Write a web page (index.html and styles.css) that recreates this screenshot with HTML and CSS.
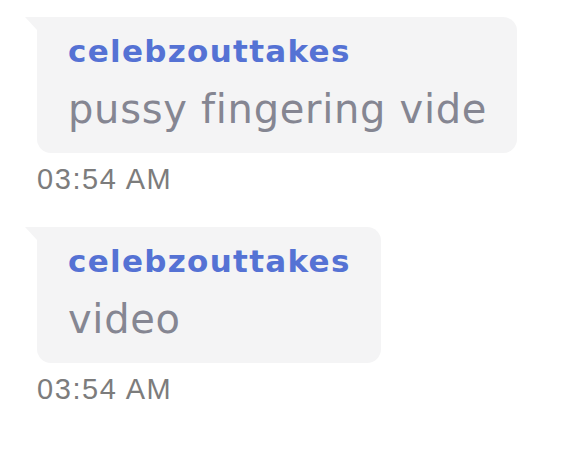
FILE: index.html
```html
<!DOCTYPE html>
<html>
<head>
<meta charset="utf-8">
<link rel="stylesheet" href="styles.css">
</head>
<body>
<div class="chat">
  <div class="msg">
    <div class="bubble">
      <div class="author">celebzouttakes</div>
      <div class="text">pussy fingering vide</div>
    </div>
    <div class="time">03:54 AM</div>
  </div>
  <div class="msg">
    <div class="bubble">
      <div class="author">celebzouttakes</div>
      <div class="text">video</div>
    </div>
    <div class="time">03:54 AM</div>
  </div>
</div>
</body>
</html>
```
FILE: styles.css
```css
html, body {
  margin: 0;
  padding: 0;
  background: #ffffff;
}
.chat {
  display: flex;
  flex-direction: column;
  align-items: flex-start;
  gap: 31px;
  padding: 17px 0 0 37px;
}
.msg {
  display: flex;
  flex-direction: column;
  align-items: flex-start;
}
.bubble {
  position: relative;
  background: #f4f4f5;
  border-radius: 0 14px 14px 14px;
  padding: 16px 30px 20px 31px;
  font-family: "DejaVu Sans", sans-serif;
}
.bubble::before {
  content: "";
  position: absolute;
  left: -12px;
  top: 0;
  width: 0;
  height: 0;
  border-top: 13px solid #f4f4f5;
  border-left: 12px solid transparent;
}
.author {
  font-size: 31px;
  line-height: 36px;
  font-weight: 700;
  letter-spacing: 1.3px;
  color: #5572d4;
}
.text {
  margin-top: 16px;
  font-size: 40px;
  line-height: 48px;
  font-weight: 400;
  letter-spacing: 0.7px;
  color: #858692;
}
.time {
  margin-top: 9px;
  font-family: "Liberation Sans", Arial, sans-serif;
  font-size: 29px;
  line-height: 34px;
  letter-spacing: 1.6px;
  color: #7c7c7c;
}
```
